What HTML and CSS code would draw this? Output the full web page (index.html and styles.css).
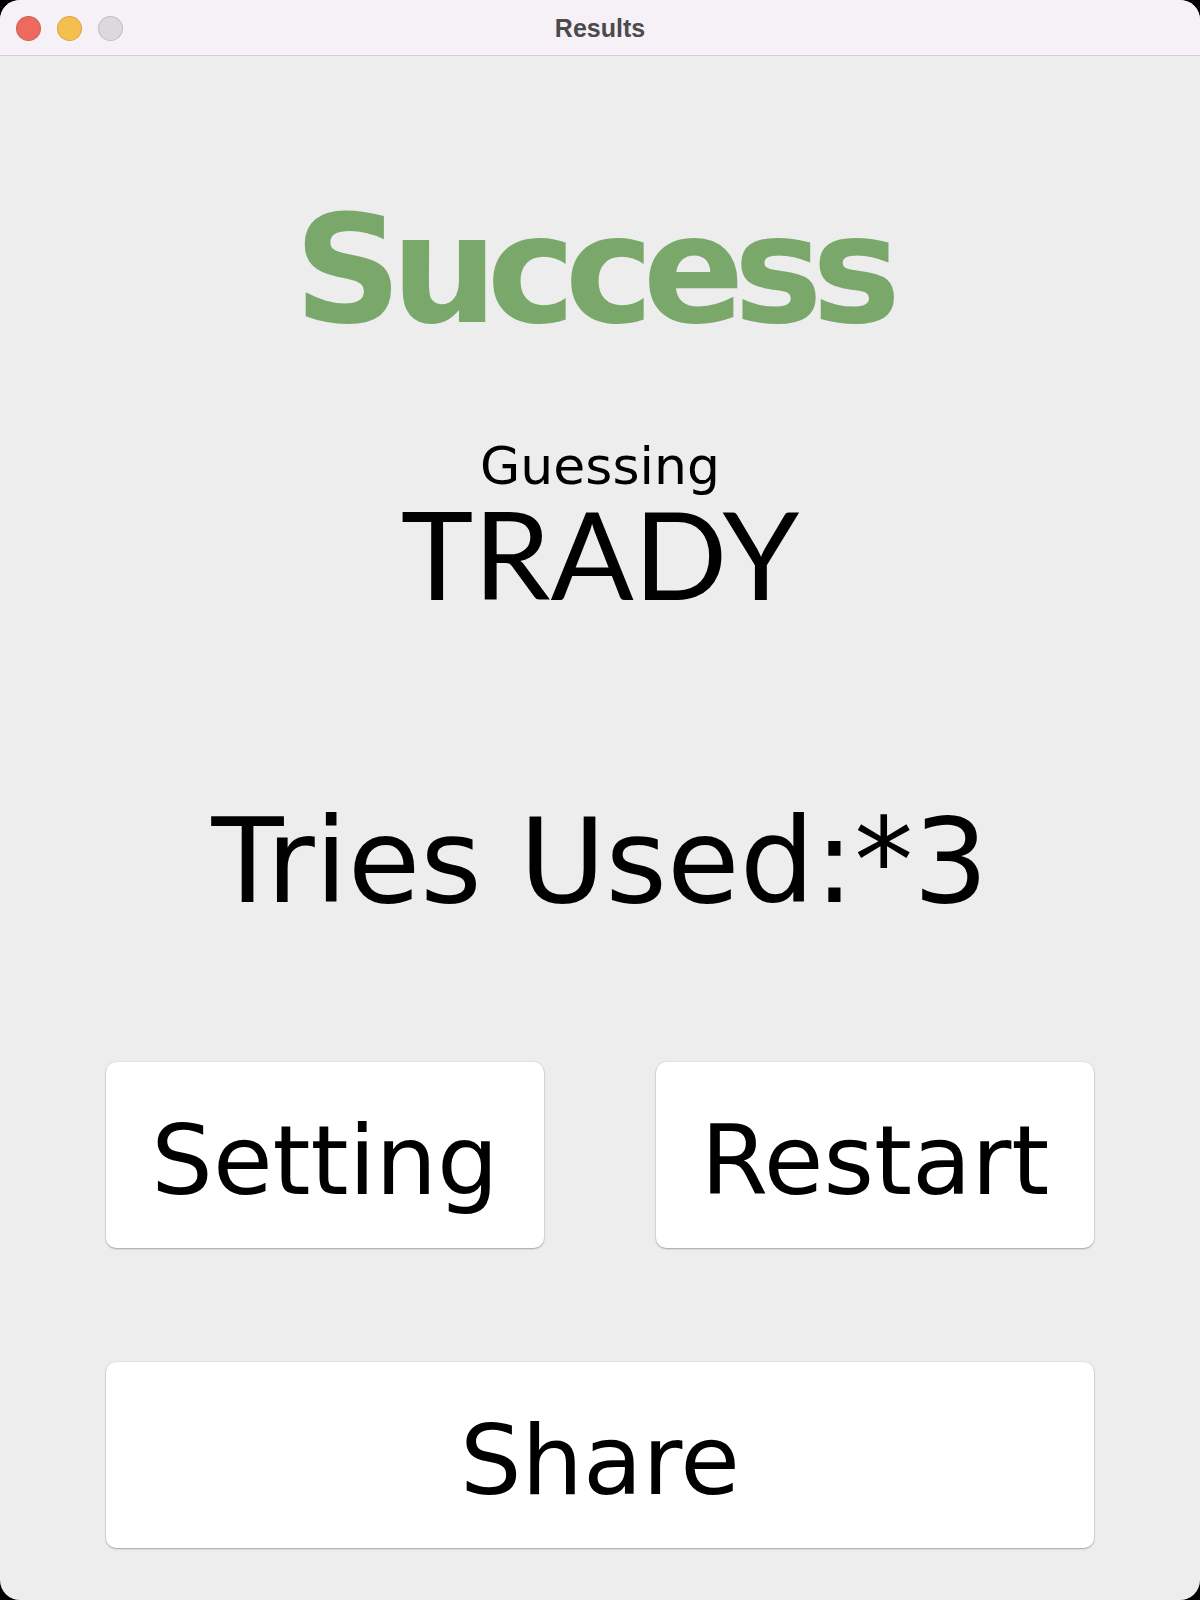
FILE: index.html
```html
<!DOCTYPE html>
<html lang="en">
<head>
<meta charset="utf-8">
<title>Results</title>
<link rel="stylesheet" href="styles.css">
</head>
<body>
<div class="window">
  <header class="titlebar">
    <div class="lights">
      <span class="light red"></span>
      <span class="light yellow"></span>
      <span class="light gray"></span>
    </div>
    <div class="title">Results</div>
  </header>
  <main class="content">
    <h1 class="success">Success</h1>
    <div class="guessing">Guessing</div>
    <div class="word">TRADY</div>
    <div class="tries">Tries Used:*3</div>
    <div class="row">
      <button class="btn">Setting</button>
      <button class="btn">Restart</button>
    </div>
    <div class="row">
      <button class="btn wide">Share</button>
    </div>
  </main>
</div>
</body>
</html>
```

FILE: styles.css
```css
html, body {
  margin: 0;
  padding: 0;
  background: #000;
}
.window {
  width: 1200px;
  height: 1600px;
  background: #ededed;
  border-radius: 20px;
  overflow: hidden;
  display: flex;
  flex-direction: column;
}
.titlebar {
  position: relative;
  height: 55px;
  background: #f6f1f7;
  border-bottom: 1px solid #d2cfd3;
  display: flex;
  align-items: center;
  justify-content: center;
  flex: none;
}
.lights {
  position: absolute;
  left: 16px;
  top: 16px;
  display: flex;
  gap: 16px;
}
.light {
  width: 23px;
  height: 23px;
  border-radius: 50%;
  border: 0.5px solid rgba(0,0,0,0.12);
}
.red { background: #ee6a5f; }
.yellow { background: #f5bf4f; }
.gray { background: #dcd8dd; }
.title {
  font-family: "Liberation Sans", Arial, sans-serif;
  font-weight: bold;
  font-size: 25px;
  color: #4b4a4c;
  margin-top: 1px;
}
.content {
  display: flex;
  flex-direction: column;
  align-items: center;
  font-family: "Comic Sans MS", "DejaVu Sans", sans-serif;
  color: #000;
}
.success {
  margin: 139px 0 0;
  padding-right: 16px;
  font-size: 150px;
  line-height: 150px;
  font-weight: bold;
  letter-spacing: -11px;
  color: #7aa86b;
}
.guessing {
  margin-top: 95px;
  font-size: 52px;
  line-height: 52px;
}
.word {
  margin-top: -1px;
  font-family: Lato, "Liberation Sans", sans-serif;
  font-size: 123px;
  line-height: 123px;
}
.tries {
  margin-top: 188px;
  font-size: 118px;
  line-height: 118px;
}
.row {
  align-self: stretch;
  display: flex;
  gap: 112px;
  padding: 0 106px;
  margin-top: 142px;
}
.row + .row {
  margin-top: 114px;
}
.btn {
  flex: 1;
  height: 186px;
  background: #fff;
  border: none;
  border-radius: 10px;
  box-shadow: 0 1px 2px rgba(0,0,0,0.28), 0 0 0 0.5px rgba(0,0,0,0.08);
  font-family: "Comic Sans MS", "DejaVu Sans", sans-serif;
  font-size: 97px;
  line-height: 97px;
  color: #000;
  padding: 10px 0 0;
  display: flex;
  align-items: center;
  justify-content: center;
}
```
